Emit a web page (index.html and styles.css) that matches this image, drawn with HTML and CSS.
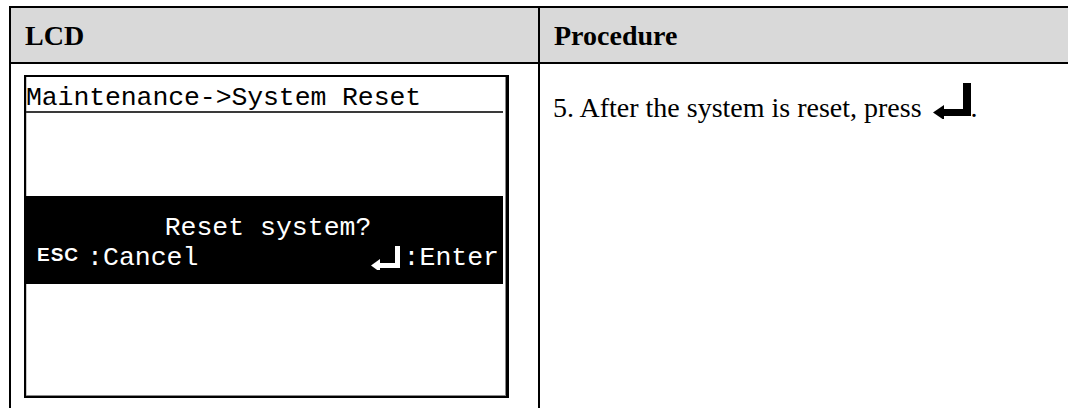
FILE: index.html
```html
<!DOCTYPE html>
<html lang="en">
<head>
<meta charset="utf-8">
<title>LCD Procedure</title>
<link rel="stylesheet" href="styles.css">
</head>
<body>
<table class="proc">
  <thead>
    <tr>
      <th class="col-lcd">LCD</th>
      <th class="col-proc">Procedure</th>
    </tr>
  </thead>
  <tbody>
    <tr>
      <td class="cell-lcd">
        <div class="lcd">
          <div class="lcd-title">Maintenance-&gt;System Reset</div>
          <div class="lcd-dialog">
            <div class="lcd-question">Reset system?</div>
            <div class="lcd-keys">
              <span class="key-left"><span class="esc">ESC</span><span>:Cancel</span></span>
              <span class="key-right">
                <svg class="lcd-enter" width="31" height="24" viewBox="0 0 31 24" aria-hidden="true">
                  <rect x="25" y="0" width="5" height="22" fill="#fff"/>
                  <rect x="9" y="17" width="21" height="5" fill="#fff"/>
                  <polygon points="1,19.5 10,13 10,26" fill="#fff"/>
                </svg><span>:Enter</span>
              </span>
            </div>
          </div>
        </div>
      </td>
      <td class="cell-proc">
        <p class="step">5. After the system is reset, press <svg class="enter" width="38" height="36" viewBox="0 0 38 36" aria-hidden="true"><rect x="30" y="0" width="8" height="33" fill="#000"/><rect x="10" y="26" width="28" height="7" fill="#000"/><polygon points="0,29.5 11,22 11,37" fill="#000"/></svg>.</p>
      </td>
    </tr>
  </tbody>
</table>
</body>
</html>
```

FILE: styles.css
```css
html, body {
  margin: 0;
  padding: 0;
  background: #fff;
  overflow: hidden;
}

body {
  padding: 6px 0 0 9px;
  width: 1068px;
  height: 408px;
  box-sizing: border-box;
  font-family: "Liberation Serif", "Times New Roman", serif;
  color: #000;
}

.proc {
  border-collapse: collapse;
  width: 1080px;
  table-layout: fixed;
}

.proc th,
.proc td {
  border: 2px solid #000;
  text-align: left;
  vertical-align: top;
}

.proc th {
  background: #d9d9d9;
  font-weight: bold;
  font-size: 28px;
  line-height: 33px;
  height: 54px;
  box-sizing: border-box;
  padding: 11px 14px 10px;
}

.col-lcd {
  width: 529px;
}

.cell-lcd {
  padding: 11px 13px 30px 13px;
}

.cell-proc {
  padding: 0 13px;
}

.step {
  margin: 0;
  padding-top: 19px;
  font-size: 28px;
  line-height: 33px;
  white-space: nowrap;
}

.enter {
  vertical-align: -2px;
  margin-left: 4px;
}

.lcd {
  width: 485px;
  height: 323px;
  box-sizing: border-box;
  border: 2px solid #000;
  border-right-width: 3px;
  box-shadow: inset -1px -1px 0 #8a8a8a, inset 1px 0 0 #c8c8c8;
  padding: 0 3px 0 0;
  display: flex;
  flex-direction: column;
  font-family: "Liberation Mono", "Courier New", monospace;
  font-size: 26.5px;
  color: #000;
}

.lcd-title {
  padding-top: 8px;
  line-height: 26px;
  border-bottom: 2px solid #3a3a3a;
  white-space: nowrap;
  letter-spacing: -0.1px;
}

.lcd-dialog {
  margin-top: 83px;
  background: #000;
  color: #fff;
  height: 88px;
  box-sizing: border-box;
  padding: 17px 4px 0 11px;
}

.lcd-question {
  text-align: center;
  line-height: 30px;
}

.lcd-keys {
  display: flex;
  justify-content: space-between;
  align-items: baseline;
  line-height: 30px;
}

.key-left,
.key-right {
  display: flex;
  align-items: baseline;
}

.esc {
  font-family: "Liberation Sans", Arial, sans-serif;
  font-weight: bold;
  font-size: 19px;
  letter-spacing: 1px;
  margin-right: 8px;
  position: relative;
  top: -4px;
}

.lcd-enter {
  align-self: center;
  margin-right: 3px;
}
```
